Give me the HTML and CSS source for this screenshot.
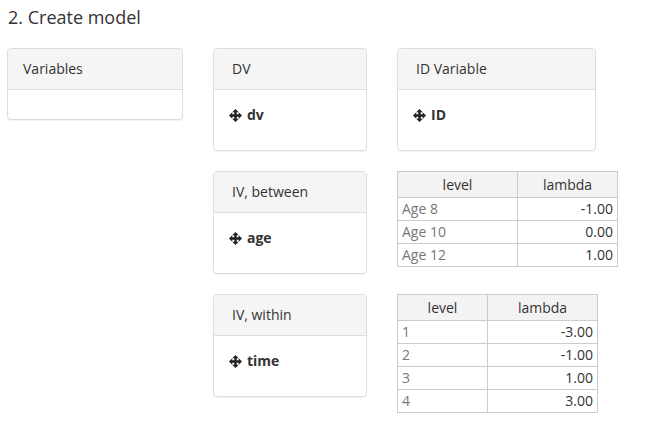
FILE: index.html
```html
<!DOCTYPE html>
<html>
<head>
<meta charset="utf-8">
<link rel="stylesheet" href="styles.css">
</head>
<body>
<div class="page">
  <h4 class="title">2. Create model</h4>
  <div class="grid">
    <div class="panel panel-vars">
      <div class="panel-heading pad-a">Variables</div>
      <div class="panel-body empty"></div>
    </div>
    <div class="panel panel-mid">
      <div class="panel-heading pad-b">DV</div>
      <div class="panel-body"><div class="item"><svg class="move" viewBox="0 0 14 14"><path d="M7 0 L10.5 3.5 H8.3 V5.7 H10.5 V3.5 L14 7 L10.5 10.5 V8.3 H8.3 V10.5 H10.5 L7 14 L3.5 10.5 H5.7 V8.3 H3.5 V10.5 L0 7 L3.5 3.5 V5.7 H5.7 V3.5 H3.5 Z"/></svg>dv</div></div>
    </div>
    <div class="panel panel-id">
      <div class="panel-heading pad-b">ID Variable</div>
      <div class="panel-body"><div class="item"><svg class="move" viewBox="0 0 14 14"><path d="M7 0 L10.5 3.5 H8.3 V5.7 H10.5 V3.5 L14 7 L10.5 10.5 V8.3 H8.3 V10.5 H10.5 L7 14 L3.5 10.5 H5.7 V8.3 H3.5 V10.5 L0 7 L3.5 3.5 V5.7 H5.7 V3.5 H3.5 Z"/></svg>ID</div></div>
    </div>

    <div class="spacer"></div>
    <div class="panel panel-mid">
      <div class="panel-heading pad-b">IV, between</div>
      <div class="panel-body"><div class="item"><svg class="move" viewBox="0 0 14 14"><path d="M7 0 L10.5 3.5 H8.3 V5.7 H10.5 V3.5 L14 7 L10.5 10.5 V8.3 H8.3 V10.5 H10.5 L7 14 L3.5 10.5 H5.7 V8.3 H3.5 V10.5 L0 7 L3.5 3.5 V5.7 H5.7 V3.5 H3.5 Z"/></svg>age</div></div>
    </div>
    <table class="ht t1">
      <thead><tr><th class="c1">level</th><th class="c2">lambda</th></tr></thead>
      <tbody>
        <tr><td class="lvl">Age 8</td><td class="num">-1.00</td></tr>
        <tr><td class="lvl">Age 10</td><td class="num">0.00</td></tr>
        <tr><td class="lvl">Age 12</td><td class="num">1.00</td></tr>
      </tbody>
    </table>

    <div class="spacer"></div>
    <div class="panel panel-mid">
      <div class="panel-heading pad-b">IV, within</div>
      <div class="panel-body"><div class="item"><svg class="move" viewBox="0 0 14 14"><path d="M7 0 L10.5 3.5 H8.3 V5.7 H10.5 V3.5 L14 7 L10.5 10.5 V8.3 H8.3 V10.5 H10.5 L7 14 L3.5 10.5 H5.7 V8.3 H3.5 V10.5 L0 7 L3.5 3.5 V5.7 H5.7 V3.5 H3.5 Z"/></svg>time</div></div>
    </div>
    <table class="ht t2">
      <thead><tr><th class="c1">level</th><th class="c2">lambda</th></tr></thead>
      <tbody>
        <tr><td class="lvl">1</td><td class="num">-3.00</td></tr>
        <tr><td class="lvl">2</td><td class="num">-1.00</td></tr>
        <tr><td class="lvl">3</td><td class="num">1.00</td></tr>
        <tr><td class="lvl">4</td><td class="num">3.00</td></tr>
      </tbody>
    </table>
  </div>
</div>
</body>
</html>
```

FILE: styles.css
```css
html, body {
  margin: 0;
  padding: 0;
  background: #fff;
}
body {
  font-family: "Open Sans", "Liberation Sans", sans-serif;
  font-size: 14px;
  line-height: 20px;
  color: #333;
}
.page {
  padding: 0 0 0 7px;
}
.title {
  margin: 0;
  padding: 5px 0 0 1px;
  font-size: 18px;
  line-height: 24px;
  font-weight: 400;
  color: #333;
}
.grid {
  margin-top: 19px;
  display: grid;
  grid-template-columns: 176px 154px auto;
  column-gap: 30px;
  row-gap: 20px;
  align-items: start;
  justify-items: start;
}
.panel {
  border: 1px solid #ddd;
  border-radius: 4px;
  background: #fff;
  box-shadow: 0 1px 1px rgba(0,0,0,0.05);
  box-sizing: border-box;
  overflow: hidden;
}
.panel-vars { width: 176px; }
.panel-mid { width: 154px; }
.panel-id { width: 199px; }
.panel-heading {
  background: #f5f5f5;
  border-bottom: 1px solid #ddd;
  padding: 10px 15px;
  line-height: 20px;
}
.pad-a { padding-left: 15px; }
.pad-b { padding-left: 18px; }
.panel-body {
  padding: 15px;
}
.panel-body.empty {
  padding: 0;
  height: 29px;
}
.item {
  font-weight: 700;
  line-height: 20px;
  margin-bottom: 10px;
  display: flex;
  align-items: center;
}
.move {
  width: 13px;
  height: 13px;
  fill: #222;
  margin-right: 5px;
}
.ht {
  border-collapse: collapse;
  table-layout: fixed;
  font-size: 14px;
}
.ht th, .ht td {
  border: 1px solid #ccc;
  padding: 0 4px;
  white-space: nowrap;
  overflow: hidden;
}
.ht th {
  background: #f3f3f3;
  font-weight: 400;
  text-align: center;
  height: 25px;
  line-height: 24px;
  color: #333;
}
.ht td {
  height: 22px;
  line-height: 22px;
}
.ht td.lvl {
  color: #777;
  text-align: left;
}
.ht td.num {
  text-align: right;
  color: #333;
}
.t1 .c1 { width: 111px; }
.t1 .c2 { width: 91px; }
.t2 .c1 { width: 81px; }
.t2 .c2 { width: 101px; }
```
